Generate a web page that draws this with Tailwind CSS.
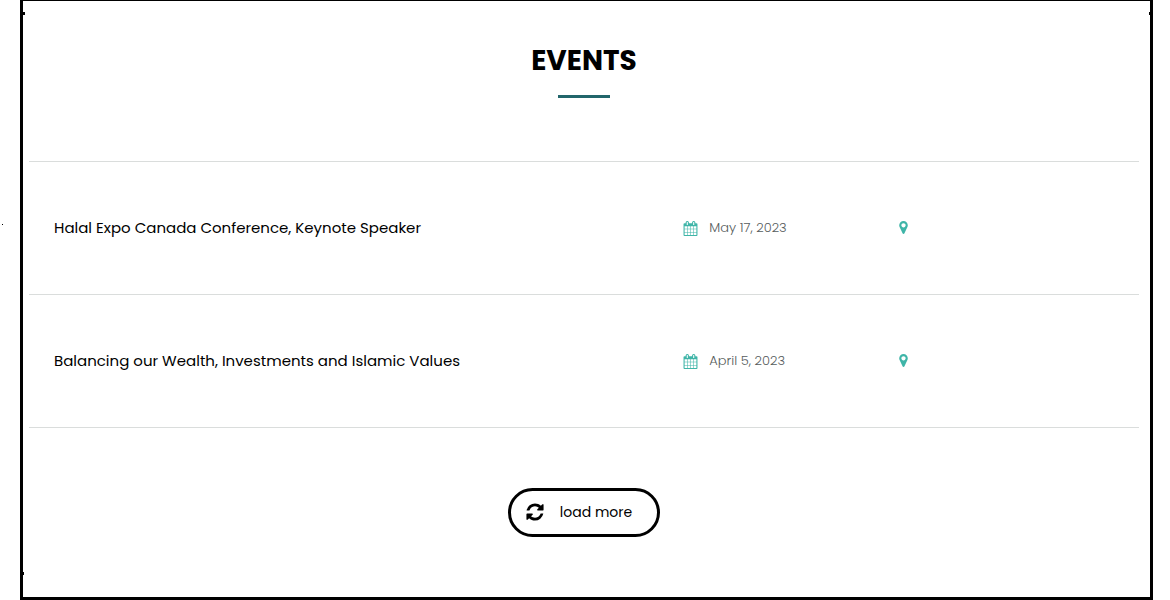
<!DOCTYPE html>
<html lang="en">
<head>
<meta charset="utf-8">
<meta name="viewport" content="width=device-width, initial-scale=1">
<title>Events</title>
<script src="https://cdn.jsdelivr.net/npm/@tailwindcss/browser@4"></script>
</head>
<body class="bg-white font-[Poppins,Inter,sans-serif] text-black">
<svg class="hidden" aria-hidden="true">
  <symbol id="calendar" viewBox="0 0 1792 1792"><path d="M192 1664h288v-288h-288v288zm352 0h320v-288h-320v288zm-352-352h288v-320h-288v320zm352 0h320v-320h-320v320zm-352-384h288v-288h-288v288zm736 736h320v-288h-320v288zm-384-736h320v-288h-320v288zm768 736h288v-288h-288v288zm-384-352h320v-320h-320v320zm-352-864v-288q0-13-9.500-22.500t-22.500-9.500h-64q-13 0-22.500 9.500t-9.500 22.500v288q0 13 9.500 22.500t22.500 9.500h64q13 0 22.500-9.500t9.500-22.500zm736 864h288v-320h-288v320zm-384-384h320v-288h-320v288zm384 0h288v-288h-288v288zm32-480v-288q0-13-9.500-22.500t-22.500-9.500h-64q-13 0-22.500 9.500t-9.500 22.500v288q0 13 9.500 22.500t22.500 9.500h64q13 0 22.500-9.500t9.500-22.500zm384-64v1280q0 52-38 90t-90 38h-1408q-52 0-90-38t-38-90v-1280q0-52 38-90t90-38h128v-96q0-66 47-113t113-47h64q66 0 113 47t47 113v96h384v-96q0-66 47-113t113-47h64q66 0 113 47t47 113v96h128q52 0 90 38t38 90z"/></symbol>
  <symbol id="marker" viewBox="0 0 1792 1792"><path d="M1152 640q0-106-75-181t-181-75-181 75-75 181 75 181 181 75 181-75 75-181zm256 0q0 109-33 179l-364 774q-16 33-47.500 52t-67.500 19-67.500-19-46.500-52l-365-774q-33-70-33-179 0-212 150-362t362-150 362 150 150 362z"/></symbol>
</svg>
<main class="relative flex min-h-screen flex-col pl-5 pr-[17px]">
  <span class="absolute left-[2px] top-[224px] size-px bg-black"></span>
  <section class="relative flex grow flex-col items-center border-x-3 border-b-3 border-t border-black pl-[6px] pr-[11px]">
    <span class="absolute left-0 top-[11px] h-[3px] w-[2px] bg-black"></span>
    <span class="absolute right-0 top-[11px] h-[3px] w-px bg-black"></span>
    <span class="absolute bottom-[22px] left-0 h-[3px] w-px bg-black"></span>
    <h1 class="mt-10 text-[28px] leading-10 font-bold">EVENTS</h1>
    <div class="mt-[14px] h-[3px] w-[52px] bg-[#22666b]"></div>
    <ul class="mt-[63px] w-full border-t border-[#dadddc]">
      <li class="flex h-[133px] items-center border-b border-[#dadddc] pl-[25px]">
        <h2 class="w-[58%] text-[15px]"><a href="#">Halal Expo Canada Conference, Keynote Speaker</a></h2>
        <p class="flex w-[213px] items-center gap-[11px] text-[13px] font-light text-[#565c5c]"><svg class="size-[15px] fill-[#3fb5a8]" aria-hidden="true"><use href="#calendar"/></svg><time datetime="2023-05-17">May 17, 2023</time></p>
        <svg class="mb-[2px] size-[15px] fill-[#3fb5a8]" role="img" aria-label="Location"><use href="#marker"/></svg>
      </li>
      <li class="flex h-[133px] items-center border-b border-[#dadddc] pl-[25px]">
        <h2 class="w-[58%] text-[15px]"><a href="#">Balancing our Wealth, Investments and Islamic Values</a></h2>
        <p class="flex w-[213px] items-center gap-[11px] text-[13px] font-light text-[#565c5c]"><svg class="size-[15px] fill-[#3fb5a8]" aria-hidden="true"><use href="#calendar"/></svg><time datetime="2023-04-05">April 5, 2023</time></p>
        <svg class="mb-[2px] size-[15px] fill-[#3fb5a8]" role="img" aria-label="Location"><use href="#marker"/></svg>
      </li>
    </ul>
    <button type="button" class="mt-[60px] mb-[60px] flex h-[49px] items-center gap-[15px] rounded-full border-3 border-black pb-[2px] pl-[14px] pr-[25px] text-sm">
      <svg class="size-5 fill-black" viewBox="0 0 1792 1792" aria-hidden="true"><path d="M1639 1056q0 5-1 7-64 268-268 434.500t-478 166.500q-146 0-282.500-55t-243.500-157l-129 129q-19 19-45 19t-45-19-19-45v-448q0-26 19-45t45-19h448q26 0 45 19t19 45-19 45l-137 137q71 66 161 102t187 36q134 0 250-65t186-179q11-17 53-117 8-23 30-23h192q13 0 22.500 9.500t9.500 22.500zm25-800v448q0 26-19 45t-45 19h-448q-26 0-45-19t-19-45 19-45l138-138q-148-137-349-137-134 0-250 65t-186 179q-11 17-53 117-8 23-30 23h-199q-13 0-22.500-9.500t-9.500-22.500v-7q65-268 270-434.500t480-166.500q146 0 284 55.500t245 156.500l130-129q19-19 45-19t45 19 19 45z"/></svg>
      load more
    </button>
  </section>
</main>
</body>
</html>
